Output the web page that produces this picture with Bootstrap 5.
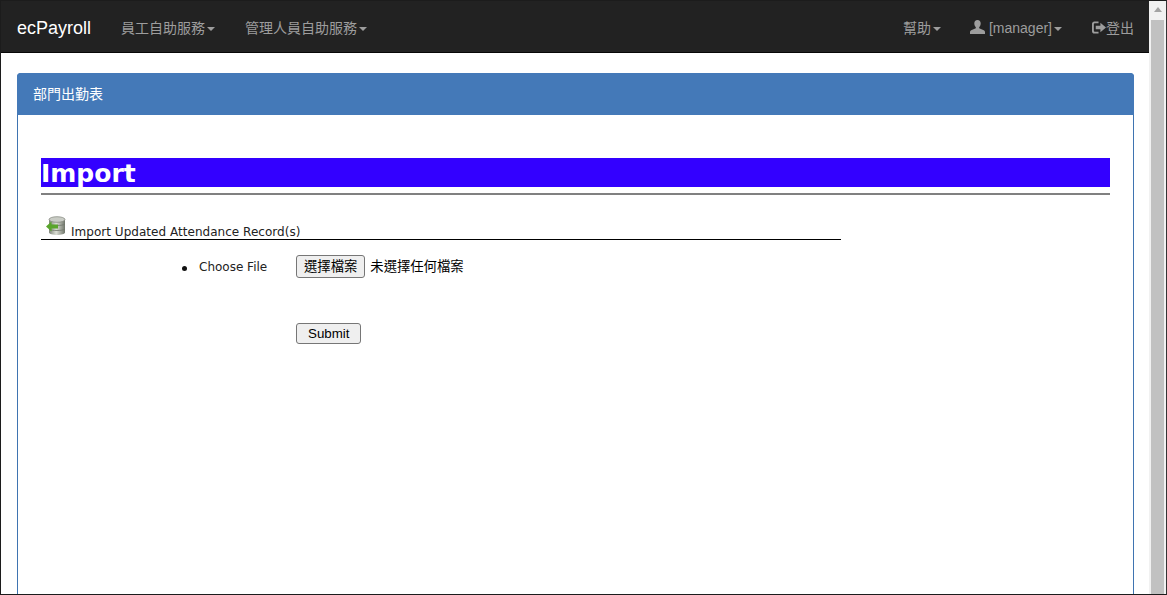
<!DOCTYPE html>
<html lang="zh-Hant">
<head>
<meta charset="utf-8">
<title>ecPayroll</title>
<link rel="stylesheet" href="https://cdn.jsdelivr.net/npm/bootstrap@5.3.0/dist/css/bootstrap.min.css">
<style>
html,body{height:100%;overflow:hidden;margin:0;background:#fff}
body{font-family:"Liberation Sans","Noto Sans CJK TC",sans-serif;font-size:14px;color:#333}
.app-shell{height:595px;border:1px solid #1c1c1c;border-right-color:#333}
.app-main{min-width:0;flex:1 1 auto;overflow:hidden}
.top-bar{height:52px;background:#222;border-bottom:1px solid #080808;padding:2px 15px 0 16px}
.top-brand{font-size:18px;color:#fff;text-decoration:none;line-height:20px;width:104px}
.top-link{color:#9d9d9d;text-decoration:none;font-size:14px;line-height:20px;white-space:nowrap}
.gap-mgr{margin-left:30px}
.gap-user{margin-left:29px}
.gap-out{margin-left:30px}
.top-caret{display:inline-block;width:0;height:0;margin-left:2px;vertical-align:middle;border-top:4px solid #9d9d9d;border-left:4px solid transparent;border-right:4px solid transparent}
.top-ico{vertical-align:-1px}
.blue-panel{margin:20px 15px 0 16px;border:1px solid #3f74b1;border-bottom:0;border-radius:4px 4px 0 0;height:530px}
.blue-head{height:42px;background:#4479b8;color:#fff;font-size:14px;padding:0 16px;line-height:42px;margin:-1px -1px 0;border-radius:4px 4px 0 0}
.blue-body{padding:43px 23px 0}
.import-title{background:#3300ff;color:#fff;font-family:"DejaVu Sans",sans-serif;font-weight:700;font-size:25px;line-height:27px;padding-top:2px;margin:0}
.title-rule{height:2px;background:#808080;margin-top:6px}
.sect-head{width:800px;height:45px;border-bottom:1px solid #000;font-family:"DejaVu Sans",sans-serif;font-size:12px;color:#222;padding-left:5px;margin-bottom:15px}
.sect-head svg{margin-right:5px;margin-bottom:3px}
.sect-text{line-height:14px;letter-spacing:.03px}
.form-grid{font-family:"DejaVu Sans",sans-serif;font-size:12px;color:#222;margin:0;padding:0;list-style:none}
.field-name{width:255px;padding-left:158px;position:relative;line-height:23px;padding-top:1px}
.field-name::before{content:"";position:absolute;left:141px;top:11px;width:5px;height:5px;border-radius:50%;background:#111}
.fake-btn{font-family:"Liberation Sans","Noto Sans CJK TC",sans-serif;font-size:13.33px;color:#000;background:#efefef;border:1px solid #767676;border-radius:3px;padding:1px 7px;line-height:19px}
.submit-btn{padding:1px 11px;line-height:17px;font-size:13.33px}
.no-file{font-family:"Liberation Sans","Noto Sans CJK TC",sans-serif;font-size:13.33px;color:#000;margin-left:5px}
.submit-row{margin:44px 0 0 255px}
.fake-scroll{width:17px;background:#f1f1f1;padding:0 2px}
.scroll-up{height:17px;position:relative}
.scroll-up::after{content:"";position:absolute;left:3px;top:6px;border-left:4px solid transparent;border-right:4px solid transparent;border-bottom:5px solid #a3a3a3}
.scroll-thumb{height:574px;background:#c1c1c1;margin-top:2px}
</style>
</head>
<body>
<div class="app-shell d-flex">
  <div class="app-main">
    <nav class="top-bar d-flex align-items-center">
      <a class="top-brand" href="#">ecPayroll</a>
      <a class="top-link" href="#">員工自助服務<span class="top-caret"></span></a>
      <a class="top-link gap-mgr" href="#">管理人員自助服務<span class="top-caret"></span></a>
      <div class="ms-auto d-flex align-items-center">
        <a class="top-link" href="#">幫助<span class="top-caret"></span></a>
        <a class="top-link gap-user" href="#">
          <svg class="top-ico" width="15" height="14" viewBox="0 0 15 14"><path fill="#9d9d9d" d="M7.500 0C5.400 0 4.300 1.500 4.300 3.500c0 1.500.6 2.800 1.500 3.600v1.100L1.200 10.300C.4 10.700 0 11.200 0 12v2h15v-2c0-.8-.4-1.300-1.200-1.700L9.200 8.200V7.100c.9-.8 1.500-2.100 1.500-3.600C10.700 1.500 9.600 0 7.500 0z"/></svg>
          [manager]<span class="top-caret"></span></a>
        <a class="top-link gap-out" href="#">
          <svg class="top-ico" width="14" height="13" viewBox="0 0 15 13"><path fill="#9d9d9d" d="M2.500 0H7v2H3C2.400 2 2 2.400 2 3v7c0 .6.400 1 1 1h4v2H2.500C1.100 13 0 11.900 0 10.500v-8C0 1.100 1.100 0 2.500 0z"/><path fill="#9d9d9d" d="M4 4.500h5V1.500l6 5-6 5v-3H4z"/></svg>登出</a>
      </div>
    </nav>
    <section class="blue-panel">
      <div class="blue-head">部門出勤表</div>
      <div class="blue-body">
        <h1 class="import-title">Import</h1>
        <div class="title-rule"></div>
        <div class="sect-head d-flex align-items-end">
          <svg width="20" height="20" viewBox="0 0 20 20">
            <defs><linearGradient id="dbg" x1="0" x2="1" y1="0" y2="0"><stop offset="0" stop-color="#7f867a"/><stop offset=".45" stop-color="#dcdfd6"/><stop offset="1" stop-color="#6f756a"/></linearGradient></defs>
            <path fill="url(#dbg)" d="M3 3.500C3 1 19 1 19 3.500V16.500C19 19.800 3 19.800 3 16.500z"/>
            <ellipse cx="11" cy="3.500" rx="8" ry="2.800" fill="#c9ccc5" stroke="#7f837a" stroke-width=".7"/>
            <path d="M3 8c2 2 14 2 16 0M3 13c2 2 14 2 16 0" fill="none" stroke="#70756b" stroke-width=".8"/>
            <path fill="#5aa52c" d="M0 10.500L5.500 5.500V8.500H12V12.500H5.500V15.500z"/>
          </svg>
          <span class="sect-text">Import Updated Attendance Record(s)</span>
        </div>
        <ul class="form-grid">
          <li class="d-flex align-items-start">
            <div class="field-name">Choose File</div>
            <div><button type="button" class="fake-btn">選擇檔案</button><span class="no-file">未選擇任何檔案</span></div>
          </li>
          <li class="submit-row"><button type="button" class="fake-btn submit-btn">Submit</button></li>
        </ul>
      </div>
    </section>
  </div>
  <div class="fake-scroll flex-shrink-0">
    <div class="scroll-up"></div>
    <div class="scroll-thumb"></div>
  </div>
</div>
</body>
</html>
